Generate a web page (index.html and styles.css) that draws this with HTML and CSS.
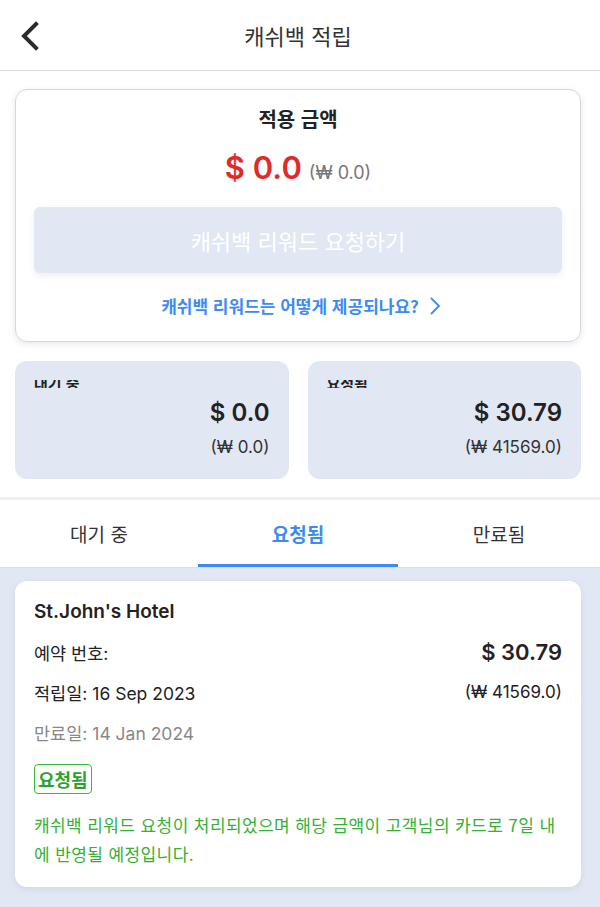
FILE: index.html
```html
<!DOCTYPE html>
<html lang="ko">
<head>
<meta charset="utf-8">
<link rel="stylesheet" href="styles.css">
</head>
<body>
<div class="app">
  <header class="topbar">
    <span class="back">
      <svg width="20" height="30" viewBox="0 0 20 30"><path d="M16 3 L4 15 L16 27" fill="none" stroke="#2b2b2b" stroke-width="4" stroke-linecap="square" stroke-linejoin="miter"/></svg>
    </span>
    <h1 class="title">캐쉬백 적립</h1>
  </header>

  <section class="top">
    <div class="apply-card">
      <div class="apply-title">적용 금액</div>
      <div class="apply-amount"><span class="usd">$ 0.0</span> <span class="krw">(₩ 0.0)</span></div>
      <div class="req-btn">캐쉬백 리워드 요청하기</div>
      <div class="how">캐쉬백 리워드는 어떻게 제공되나요?
        <svg width="12" height="20" viewBox="0 0 12 20"><path d="M2 2 L10 10 L2 18" fill="none" stroke="#3d8bf2" stroke-width="1.8"/></svg>
      </div>
    </div>

    <div class="summary">
      <div class="sum-card">
        <div class="sum-label"><span>대기 중</span></div>
        <div class="sum-usd">$ 0.0</div>
        <div class="sum-krw">(₩ 0.0)</div>
      </div>
      <div class="sum-card">
        <div class="sum-label"><span>요청됨</span></div>
        <div class="sum-usd">$ 30.79</div>
        <div class="sum-krw">(₩ 41569.0)</div>
      </div>
    </div>
  </section>

  <nav class="tabs">
    <div class="tab">대기 중</div>
    <div class="tab active">요청됨</div>
    <div class="tab">만료됨</div>
  </nav>

  <section class="list">
    <div class="item">
      <div class="hotel">St.John's Hotel</div>
      <div class="row first">
        <span class="lbl">예약 번호:</span>
        <span class="item-usd">$ 30.79</span>
      </div>
      <div class="row">
        <span class="lbl">적립일: 16 Sep 2023</span>
        <span class="item-krw">(₩ 41569.0)</span>
      </div>
      <div class="row muted">만료일: 14 Jan 2024</div>
      <span class="badge">요청됨</span>
      <p class="note">캐쉬백 리워드 요청이 처리되었으며 해당 금액이 고객님의 카드로 7일 내에 반영될 예정입니다.</p>
    </div>
  </section>
</div>
</body>
</html>
```

FILE: styles.css
```css
* { box-sizing: border-box; }
html, body { margin: 0; padding: 0; }
body {
  width: 600px;
  height: 907px;
  overflow: hidden;
  background: #e1e7f3;
  font-family: "Inter", "Noto Sans CJK KR", sans-serif;
  color: #222;
}
.app { display: flex; flex-direction: column; }

.topbar {
  position: relative;
  height: 71px;
  background: #fff;
  border-bottom: 1px solid #d8dbe0;
  display: flex;
  align-items: center;
  justify-content: center;
}
.back {
  position: absolute;
  left: 20px;
  top: 21px;
  width: 20px;
  height: 30px;
  display: flex;
}
.title {
  margin: 0;
  font-size: 22px;
  font-weight: 400;
  color: #333;
  font-family: "Noto Sans CJK KR", sans-serif;
  padding-right: 4px;
}

.top {
  background: #fff;
  padding: 18px 19px 18px 15px;
  border-bottom: 3px solid #eef0f5;
}
.apply-card {
  height: 253px;
  border: 1px solid #d3d7e0;
  border-radius: 12px;
  box-shadow: 0 2px 6px rgba(120, 130, 160, 0.18);
  display: flex;
  flex-direction: column;
  align-items: center;
  padding: 13px 18px 0;
}
.apply-title {
  font-family: "Noto Sans CJK KR", sans-serif;
  font-size: 20px;
  font-weight: 700;
  color: #222;
  line-height: 32px;
}
.apply-amount {
  margin-top: 13px;
  line-height: 40px;
  display: flex;
  align-items: baseline;
  gap: 7px;
}
.usd {
  font-size: 31px;
  font-weight: 600;
  color: #e02b2b;
}
.krw {
  font-size: 18px;
  color: #777;
}
.req-btn {
  margin-top: 14px;
  width: 100%;
  height: 66px;
  border-radius: 6px;
  background: #e1e7f3;
  box-shadow: 0 3px 6px rgba(140, 150, 180, 0.15);
  color: #fff;
  font-family: "Noto Sans CJK KR", sans-serif;
  font-size: 22px;
  display: flex;
  align-items: center;
  justify-content: center;
}
.how {
  margin-top: 20px;
  color: #3d8bf2;
  font-family: "Noto Sans CJK KR", sans-serif;
  font-size: 17px;
  font-weight: 700;
  display: flex;
  align-items: center;
  gap: 10px;
  padding-left: 6px;
}

.summary {
  margin-top: 19px;
  display: grid;
  grid-template-columns: 1fr 1fr;
  gap: 19px;
}
.sum-card {
  height: 118px;
  background: #e1e7f3;
  border-radius: 12px;
  padding: 0 19px 0 19px;
  display: flex;
  flex-direction: column;
}
.sum-label {
  margin-top: 19px;
  height: 8px;
  overflow: hidden;
  display: flex;
  align-items: flex-end;
}
.sum-label span {
  font-family: "Noto Sans CJK KR", sans-serif;
  font-size: 15px;
  font-weight: 700;
  line-height: 15px;
  margin-bottom: -2px;
  color: #222;
}
.sum-usd {
  margin-top: 10px;
  align-self: flex-end;
  font-size: 24px;
  font-weight: 600;
  color: #222;
  line-height: 30px;
}
.sum-krw {
  margin-top: 7px;
  align-self: flex-end;
  font-size: 17px;
  color: #333;
  line-height: 24px;
}

.tabs {
  height: 68px;
  background: #fff;
  display: grid;
  grid-template-columns: 198px 200px 202px;
  border-bottom: 1px solid #d9dee8;
}
.tab {
  display: flex;
  align-items: center;
  justify-content: center;
  font-family: "Noto Sans CJK KR", sans-serif;
  font-size: 19px;
  color: #333;
  border-bottom: 3px solid transparent;
  padding-top: 3px;
}
.tab.active {
  color: #3d8bf2;
  font-weight: 700;
  border-bottom-color: #3d8bf2;
}

.list {
  padding: 13px 19px 0 15px;
}
.item {
  background: #fff;
  border-radius: 12px;
  box-shadow: 0 2px 6px rgba(120, 130, 160, 0.15);
  padding: 16px 19px 18px;
  height: 306px;
}
.hotel {
  font-size: 19px;
  font-weight: 600;
  color: #222;
  line-height: 30px;
}
.row {
  display: flex;
  justify-content: space-between;
  align-items: center;
  height: 40px;
  font-size: 17.5px;
  color: #222;
}
.row.first { margin-top: 5px; }
.item-usd {
  font-size: 22px;
  font-weight: 600;
}
.item-krw { font-size: 17px; }
.muted { color: #888; }
.badge {
  display: inline-block;
  margin-top: 12px;
  border: 1.5px solid #3ab83a;
  border-radius: 4px;
  padding: 0 3px;
  font-family: "Noto Sans CJK KR", sans-serif;
  font-size: 18px;
  font-weight: 700;
  line-height: 28px;
  color: #2aa52a;
}
.note {
  margin: 16px 0 0;
  font-family: "Noto Sans CJK KR", sans-serif;
  font-size: 17px;
  letter-spacing: 0.4px;
  line-height: 29px;
  color: #35b035;
}
```
